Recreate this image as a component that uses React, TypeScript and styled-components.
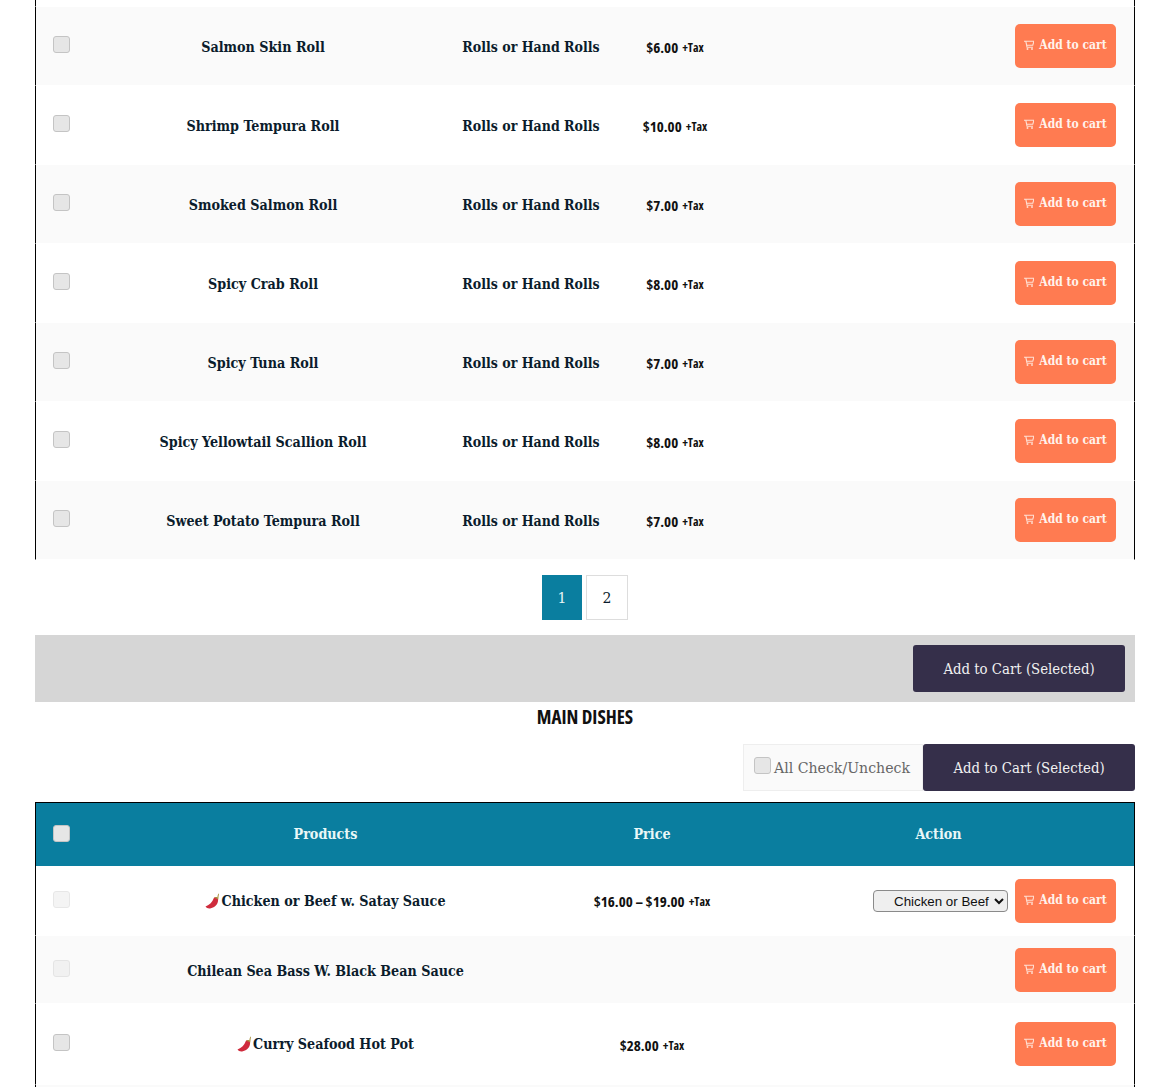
import React from 'react';
import styled, { createGlobalStyle } from 'styled-components';

const GlobalStyle = createGlobalStyle`
  html, body {
    margin: 0;
    padding: 0;
    background: #fff;
  }
  body {
    font-family: 'DejaVu Serif', 'Liberation Serif', serif;
    color: #0b1c2c;
  }
`;

const Page = styled.div`
  width: 1100px;
  height: 1087px;
  margin: 0 35px;
  overflow: hidden;
`;

const TableStub = styled.div`
  box-sizing: border-box;
  height: 7px;
  border-left: 1px solid #000;
  border-right: 1px solid #000;
  border-bottom: 1px solid #fff;
`;

const Row = styled.div<{ $columns: string; $height: number; $shaded?: boolean }>`
  box-sizing: border-box;
  display: grid;
  grid-template-columns: ${(p) => p.$columns};
  align-items: center;
  height: ${(p) => p.$height}px;
  background: ${(p) => (p.$shaded ? '#fafafa' : '#fff')};
  border-left: 1px solid #000;
  border-right: 1px solid #000;
  border-bottom: 1px solid #fff;
`;

const HeadRow = styled(Row)`
  height: 64px;
  background: #0a7e9f;
  border-top: 1px solid #000;
  border-bottom: 0;
`;

const Check = styled.input.attrs({ type: 'checkbox' })<{ $faded?: boolean; $drop?: boolean }>`
  appearance: none;
  box-sizing: border-box;
  width: 17px;
  height: 17px;
  margin: 0 0 ${(p) => (p.$drop ? 2 : 4)}px 17px;
  background: #e6e6e6;
  border: 1px solid #c4c4c4;
  border-radius: 3px;
  opacity: ${(p) => (p.$faded ? 0.4 : 1)};
`;

const Name = styled.div<{ $spicy?: boolean }>`
  display: flex;
  align-items: center;
  justify-content: center;
  font-size: 14.2px;
  font-weight: 700;
  font-stretch: condensed;
  line-height: 22px;
  padding-top: ${(p) => (p.$spicy ? 0 : 2)}px;
  white-space: nowrap;
`;

const Category = styled(Name)`
  font-size: 14px;
`;

const HeadLabel = styled(Name)`
  color: #e9f7f7;
  padding: 0 0 2px;
`;

const PriceCell = styled.div`
  display: flex;
  align-items: baseline;
  justify-content: center;
  gap: 4px;
  padding-top: 1px;
  font-family: 'Open Sans', 'Liberation Sans', sans-serif;
  font-stretch: 75%;
  color: #111;
  white-space: nowrap;
`;

const Amount = styled.span`
  font-size: 15px;
  font-weight: 700;
`;

const Tax = styled.span`
  font-size: 12px;
  font-weight: 700;
  position: relative;
  top: -1px;
`;

const ActionCell = styled.div`
  display: flex;
  align-items: center;
  justify-content: flex-end;
  gap: 7px;
  padding-right: 18px;
`;

const CartButton = styled.button`
  box-sizing: border-box;
  display: flex;
  align-items: center;
  justify-content: center;
  gap: 5px;
  width: 101px;
  height: 44px;
  padding: 0 0 2px;
  background: #ff7b51;
  border: 0;
  border-radius: 5px;
  color: #fff3ec;
  font-family: inherit;
  font-size: 12px;
  font-weight: 700;
  font-stretch: condensed;
`;

const VariantSelect = styled.select`
  box-sizing: border-box;
  width: 135px;
  height: 22px;
  margin-top: 1px;
  padding-left: 16px;
  font-family: 'Liberation Sans', Arial, sans-serif;
  font-size: 13.33px;
  color: #111;
  background: #efefef;
  border: 1px solid #8a8a8a;
  border-radius: 4px;
`;

const Pagination = styled.div`
  display: flex;
  justify-content: center;
  gap: 4px;
  margin: 15px 0;
`;

const PageLink = styled.a<{ $active?: boolean }>`
  box-sizing: border-box;
  display: flex;
  align-items: center;
  justify-content: center;
  width: ${(p) => (p.$active ? 40 : 42)}px;
  height: 45px;
  font-size: 14px;
  background: ${(p) => (p.$active ? '#0a7e9f' : '#fff')};
  color: ${(p) => (p.$active ? '#e9f7f7' : '#0b1c2c')};
  border: ${(p) => (p.$active ? '0' : '1px solid #ddd')};
`;

const SelectedBar = styled.div`
  display: flex;
  justify-content: flex-end;
  padding: 10px;
  height: 47px;
  background: #d6d6d6;
`;

const SelectedButton = styled.button`
  box-sizing: border-box;
  width: 212px;
  height: 47px;
  padding: 0;
  background: #352f4a;
  border: 0;
  border-radius: 3px;
  color: #f1f1f1;
  font-family: inherit;
  font-size: 14.8px;
  font-stretch: condensed;
`;

const SectionTitle = styled.h2`
  margin: 0;
  height: 42px;
  padding-top: 3px;
  box-sizing: border-box;
  text-align: center;
  font-family: 'Open Sans', 'Liberation Sans', sans-serif;
  font-stretch: 75%;
  font-size: 19px;
  line-height: 24px;
  font-weight: 700;
  color: #111;
`;

const Controls = styled.div`
  display: flex;
  justify-content: flex-end;
  margin-bottom: 11px;
`;

const AllCheck = styled.label`
  box-sizing: border-box;
  display: flex;
  align-items: center;
  gap: 3px;
  width: 180px;
  height: 47px;
  padding-left: 10px;
  background: #fafafa;
  border: 1px solid #eee;
  color: #666;
  font-size: 15.7px;
  font-stretch: condensed;
  white-space: nowrap;
`;

const AllCheckBox = styled(Check)`
  flex: none;
  margin: 0 0 4px;
`;

const ChiliMark = styled.svg`
  flex: none;
`;

const Chili = () => (
  <ChiliMark width="16" height="16" viewBox="0 0 16 16" aria-hidden="true">
    <path d="M.5 13.500c1 1.700 3.200 2.300 5.400 1.700 3.800-1 7-3.600 7.200-8 .1-1.300-.6-2.300-1.700-2.700-1.200-.4-2.400.1-2.900 1.300-1 3-3.800 6.300-8 7.700Z" fill="#cf2b3c" />
    <path d="M9.200 5c.7-.9 2-1.200 3.200-.6.100-1.300.3-2.700 1.100-3.900.3.100.4.200.5.400-.4 1.300-.5 3-.6 4.600l-.3 1.200C12.500 5.900 10.700 4.900 9.200 5Z" fill="#a9913f" />
  </ChiliMark>
);

const CartIcon = () => (
  <svg width="10" height="10" viewBox="0 0 10 10" fill="none" stroke="currentColor" strokeWidth="1.1" strokeOpacity=".85" aria-hidden="true">
    <path d="M0 1.200h10L8.800 5.200H2.600L1.800 1.200M2.600 5.200 3 7.300h6" />
    <circle cx="3.500" cy="9" r=".4" />
    <circle cx="8" cy="9" r=".4" />
  </svg>
);

const Price = ({ value }: { value: string }) => (
  <PriceCell>
    <Amount>{value}</Amount>
    <Tax>+Tax</Tax>
  </PriceCell>
);

const AddToCart = () => (
  <CartButton>
    <CartIcon />
    Add to cart
  </CartButton>
);

const ROLL_COLUMNS = '54px 346px 190px 98px 1fr';
const DISH_COLUMNS = '54px 471px 182px 1fr';

const rolls = [
  { name: 'Salmon Skin Roll', price: '$6.00' },
  { name: 'Shrimp Tempura Roll', price: '$10.00' },
  { name: 'Smoked Salmon Roll', price: '$7.00' },
  { name: 'Spicy Crab Roll', price: '$8.00' },
  { name: 'Spicy Tuna Roll', price: '$7.00' },
  { name: 'Spicy Yellowtail Scallion Roll', price: '$8.00' },
  { name: 'Sweet Potato Tempura Roll', price: '$7.00' },
];

export default function App() {
  return (
    <Page>
      <GlobalStyle />
      <TableStub />
      {rolls.map((roll, i) => (
        <Row key={roll.name} $columns={ROLL_COLUMNS} $height={79} $shaded={i % 2 === 0}>
          <Check />
          <Name>{roll.name}</Name>
          <Category>Rolls or Hand Rolls</Category>
          <Price value={roll.price} />
          <ActionCell>
            <AddToCart />
          </ActionCell>
        </Row>
      ))}
      <Pagination>
        <PageLink $active>1</PageLink>
        <PageLink>2</PageLink>
      </Pagination>
      <SelectedBar>
        <SelectedButton>Add to Cart (Selected)</SelectedButton>
      </SelectedBar>
      <SectionTitle>MAIN DISHES</SectionTitle>
      <Controls>
        <AllCheck>
          <AllCheckBox />
          All Check/Uncheck
        </AllCheck>
        <SelectedButton>Add to Cart (Selected)</SelectedButton>
      </Controls>
      <HeadRow $columns={DISH_COLUMNS} $height={64}>
        <Check $drop />
        <HeadLabel>Products</HeadLabel>
        <HeadLabel>Price</HeadLabel>
        <HeadLabel>Action</HeadLabel>
      </HeadRow>
      <Row $columns={DISH_COLUMNS} $height={70}>
        <Check $faded $drop />
        <Name $spicy>
          <Chili />
          Chicken or Beef w. Satay Sauce
        </Name>
        <PriceCell>
          <Amount>$16.00 – $19.00</Amount>
          <Tax>+Tax</Tax>
        </PriceCell>
        <ActionCell>
          <VariantSelect defaultValue="Chicken or Beef">
            <option>Chicken or Beef</option>
          </VariantSelect>
          <AddToCart />
        </ActionCell>
      </Row>
      <Row $columns={DISH_COLUMNS} $height={68} $shaded>
        <Check $faded $drop />
        <Name>Chilean Sea Bass W. Black Bean Sauce</Name>
        <div />
        <ActionCell>
          <AddToCart />
        </ActionCell>
      </Row>
      <Row $columns={DISH_COLUMNS} $height={81}>
        <Check />
        <Name $spicy>
          <Chili />
          Curry Seafood Hot Pot
        </Name>
        <Price value="$28.00" />
        <ActionCell>
          <AddToCart />
        </ActionCell>
      </Row>
      <Row $columns={DISH_COLUMNS} $height={20} $shaded />
    </Page>
  );
}
